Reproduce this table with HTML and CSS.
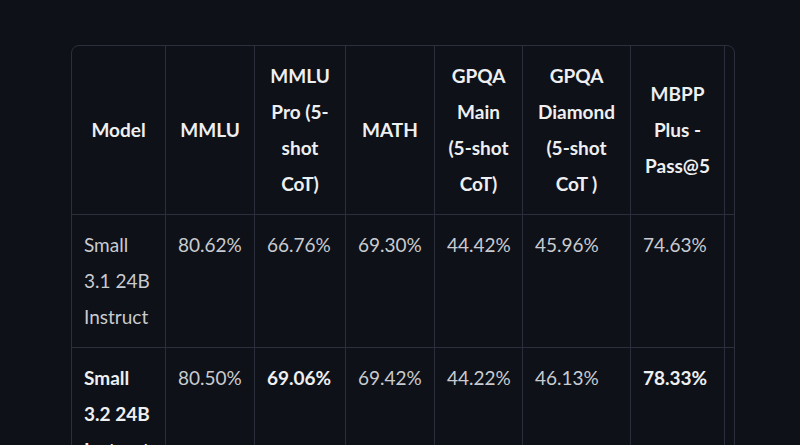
FILE: index.html
```html
<!DOCTYPE html>
<html lang="en">
<head>
<meta charset="utf-8">
<title>Benchmarks</title>
<link rel="stylesheet" href="styles.css">
</head>
<body>
<div class="table-wrap">
  <table class="bench">
    <colgroup>
      <col class="c-model">
      <col class="c-mmlu">
      <col class="c-pro">
      <col class="c-math">
      <col class="c-main">
      <col class="c-diamond">
      <col class="c-mbpp">
      <col class="c-more">
    </colgroup>
    <thead>
      <tr>
        <th>Model</th>
        <th>MMLU</th>
        <th>MMLU<br>Pro (5-<br>shot<br>CoT)</th>
        <th>MATH</th>
        <th>GPQA<br>Main<br>(5-shot<br>CoT)</th>
        <th>GPQA<br>Diamond<br>(5-shot<br>CoT )</th>
        <th>MBPP<br>Plus -<br>Pass@5</th>
        <th class="last"></th>
      </tr>
    </thead>
    <tbody>
      <tr>
        <td>Small<br>3.1 24B<br>Instruct</td>
        <td>80.62%</td>
        <td>66.76%</td>
        <td>69.30%</td>
        <td>44.42%</td>
        <td>45.96%</td>
        <td>74.63%</td>
        <td class="last"></td>
      </tr>
      <tr class="final">
        <td><strong>Small<br>3.2 24B<br>Instruct</strong></td>
        <td>80.50%</td>
        <td><strong>69.06%</strong></td>
        <td>69.42%</td>
        <td>44.22%</td>
        <td>46.13%</td>
        <td><strong>78.33%</strong></td>
        <td class="last"></td>
      </tr>
    </tbody>
  </table>
</div>
</body>
</html>
```
FILE: styles.css
```css
html, body {
  margin: 0;
  padding: 0;
  background: #0e1117;
}

body {
  font-family: Lato, "Open Sans", sans-serif;
  font-size: 19px;
  line-height: 36px;
  color: #e4e5e8;
}

.table-wrap {
  box-sizing: border-box;
  width: 664px;
  margin: 45px 0 0 71px;
  border: 1px solid #2a2f3b;
  border-radius: 8px;
  overflow: hidden;
}

.bench {
  table-layout: fixed;
  border-collapse: separate;
  border-spacing: 0;
  width: 673px;
}

.c-model { width: 94px; }
.c-mmlu { width: 89px; }
.c-pro { width: 91px; }
.c-math { width: 89px; }
.c-main { width: 88px; }
.c-diamond { width: 108px; }
.c-mbpp { width: 94px; }
.c-more { width: 20px; }

.bench th,
.bench td {
  box-sizing: border-box;
  padding: 12px;
  border-right: 1px solid #2a2f3b;
  border-bottom: 1px solid #2a2f3b;
  white-space: nowrap;
}

.bench th.last,
.bench td.last {
  border-right: none;
  padding: 12px 0;
}

.bench .final td {
  border-bottom: none;
}

.bench th {
  font-weight: 700;
  text-align: center;
  vertical-align: middle;
  color: #eeeff1;
}

.bench td {
  font-weight: 400;
  text-align: left;
  vertical-align: top;
  color: #c9cbd0;
}

.bench strong {
  font-weight: 700;
  color: #eeeff1;
}
```
